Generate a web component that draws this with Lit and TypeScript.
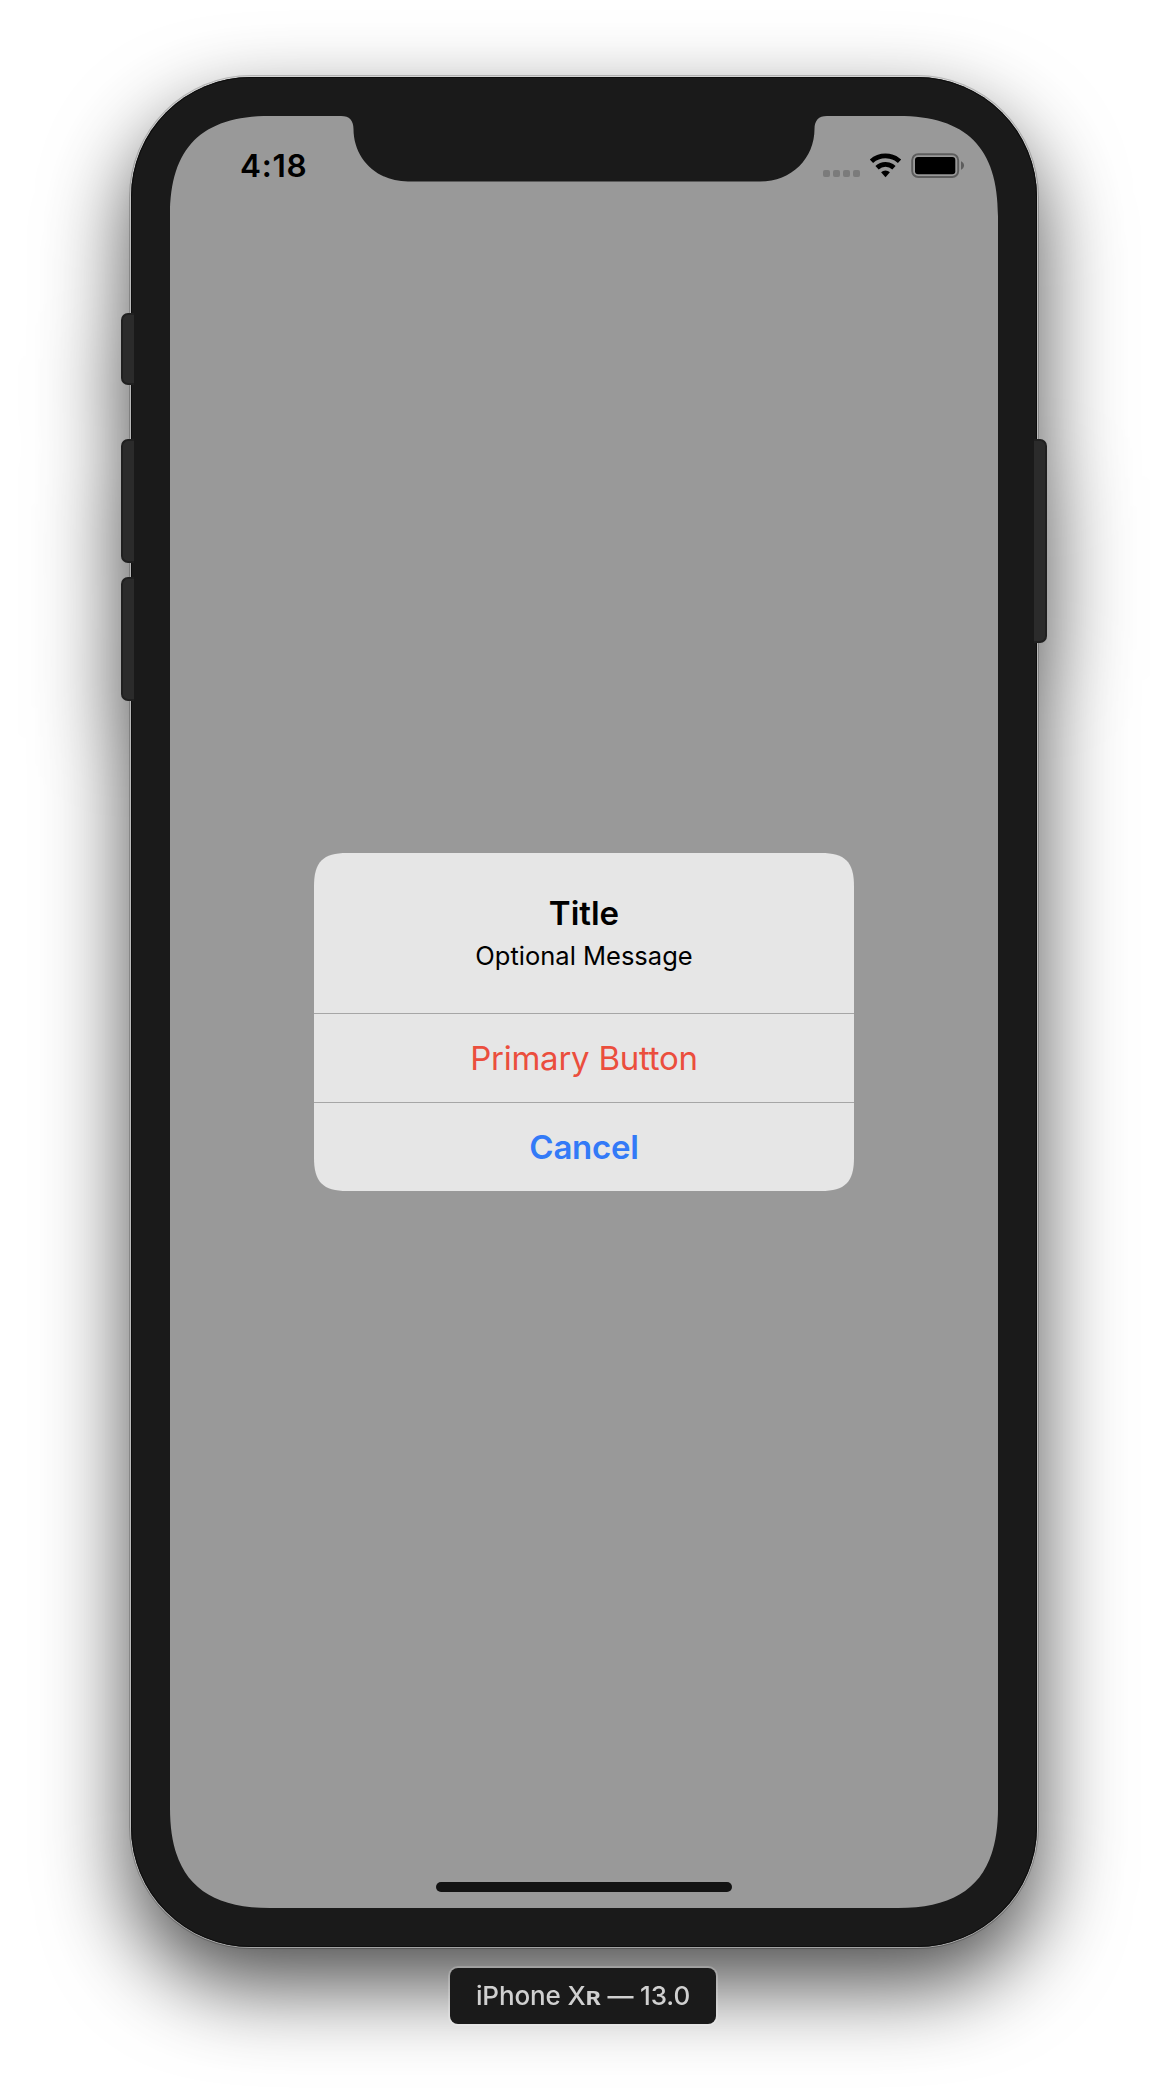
import { LitElement, html, css, svg } from "lit";
import { customElement } from "lit/decorators.js";

@customElement("status-icons")
class StatusIcons extends LitElement {
  static styles = css`
    :host { display: block; }
    svg { display: block; }
  `;

  render() {
    const dots = [0, 10, 20, 30].map(
      (x) => svg`<rect x=${x} y="18" width="7" height="7" rx="2" fill="#7b7b7b" />`
    );
    return html`
      <svg width="142" height="28" viewBox="0 0 142 28">
        ${dots}
        <g transform="translate(62.5 25.2)">
          <path d="M-15.7 -17.75A23.7 23.7 0 0 1 15.7 -17.75L12.4 -14.3A19 19 0 0 0 -12.4 -14.3Z" />
          <path d="M-10.1 -11.2A15.1 15.1 0 0 1 10.1 -11.2L6.8 -7.8A10.4 10.4 0 0 0 -6.8 -7.8Z" />
          <path d="M-4.4 -4.9A6.6 6.6 0 0 1 4.4 -4.9L0 0Z" />
        </g>
        <rect x="89.2" y="2.2" width="46" height="22.8" rx="6" fill="none" stroke="#5d5d5d" stroke-width="1.9" />
        <rect x="92" y="5" width="40.3" height="17.2" rx="3" />
        <path d="M138 9.3C139.9 10 141 11.6 141 13.5C141 15.4 139.9 17 138 17.7Z" fill="#5d5d5d" />
      </svg>
    `;
  }
}

@customElement("alert-dialog")
class AlertDialog extends LitElement {
  static styles = css`
    :host {
      display: flex;
      flex-direction: column;
      width: 540px;
      height: 338px;
      background: #e6e6e6;
      clip-path: path("M0 33C0 9 9 0 33 0H507C531 0 540 9 540 33V305C540 329 531 338 507 338H33C9 338 0 329 0 305Z");
      text-align: center;
      color: #000;
    }
    .head {
      box-sizing: border-box;
      height: 160px;
      padding-top: 40px;
    }
    .title {
      font-size: 33px;
      line-height: 40px;
      font-weight: 600;
      letter-spacing: 0;
    }
    .message {
      font-size: 25.5px;
      line-height: 34px;
      margin-top: 6px;
    }
    .action {
      box-sizing: border-box;
      height: 89px;
      border: 0;
      border-top: 1px solid #a6a6a6;
      background: none;
      padding: 0;
      font: 400 33px/88px Inter, "Liberation Sans", sans-serif;
      letter-spacing: -0.25px;
    }
    .destructive { color: #eb4e3d; }
    .cancel { color: #337af7; font-weight: 600; }
  `;

  render() {
    return html`
      <div class="head">
        <div class="title">Title</div>
        <div class="message">Optional Message</div>
      </div>
      <button class="action destructive">Primary Button</button>
      <button class="action cancel">Cancel</button>
    `;
  }
}

@customElement("app-root")
class AppRoot extends LitElement {
  static styles = css`
    :host {
      display: flex;
      flex-direction: column;
      align-items: center;
      box-sizing: border-box;
      height: 2096px;
      padding-top: 77px;
      background: #fff;
      overflow: hidden;
      font-family: Inter, "Liberation Sans", sans-serif;
    }
    .device {
      position: relative;
      flex: none;
      filter: drop-shadow(0 37px 43px rgba(0, 0, 0, 0.7));
    }
    .phone {
      box-sizing: border-box;
      width: 906px;
      height: 1870px;
      padding: 39px;
      border-radius: 120px;
      background: #1a1a1a;
      box-shadow:
        inset 0 0 0 1px #0d0d0d,
        0 0 0 1px rgba(255, 255, 255, 0.45),
        0 0 0 2px rgba(0, 0, 0, 0.2);
    }
    .key {
      position: absolute;
      box-sizing: border-box;
      width: 13px;
      background: #2b2b2b;
      border: 2px solid #202020;
    }
    .left { left: -10px; border-right: 0; border-radius: 7px 0 0 7px; }
    .right { right: -10px; border-left: 0; border-radius: 0 7px 7px 0; }
    .mute { top: 236px; height: 72px; }
    .up { top: 362px; height: 124px; }
    .down { top: 500px; height: 124px; }
    .power { top: 362px; height: 204px; }
    .screen {
      display: flex;
      flex-direction: column;
      width: 828px;
      height: 1792px;
      background: #999;
      clip-path: path("M0 100C0 31.5 31.5 0 100 0H171C179.5 0 183.5 4.5 183.5 13C183.5 42 206 65.5 238 65.5H590C622 65.5 644.5 42 644.5 13C644.5 4.5 648.5 0 657 0H728C796.5 0 828 31.5 828 100V1692C828 1760.5 796.5 1792 728 1792H100C31.5 1792 0 1760.5 0 1692Z");
    }
    .status {
      display: flex;
      justify-content: space-between;
      box-sizing: border-box;
      height: 88px;
      padding: 30px 33px 0 70px;
    }
    .time {
      font-size: 31.5px;
      line-height: 40px;
      font-weight: 600;
      letter-spacing: 0.7px;
    }
    .icons { margin-top: 6px; }
    .content {
      flex: 1;
      display: flex;
      align-items: center;
      justify-content: center;
    }
    .home {
      display: flex;
      justify-content: center;
      align-items: flex-end;
      box-sizing: border-box;
      height: 68px;
      padding-bottom: 16px;
    }
    .bar {
      width: 296px;
      height: 10px;
      border-radius: 5px;
      background: #131313;
    }
    .label {
      position: relative;
      margin-top: 21px;
      width: 266px;
      height: 56px;
      flex: none;
      border-radius: 8px;
      background: #1a1a1a;
      box-shadow: 0 0 0 2px rgba(255, 255, 255, 0.2);
      color: #d0d0d0;
      font-size: 26px;
      font-weight: 500;
      line-height: 56px;
      letter-spacing: -0.13px;
      text-align: center;
      white-space: nowrap;
      margin-right: 2px;
    }
    .small { font-weight: 600; }
  `;

  render() {
    return html`
      <div class="device">
        <div class="phone">
          <div class="screen">
            <div class="status">
              <div class="time">4:18</div>
              <status-icons class="icons"></status-icons>
            </div>
            <div class="content"><alert-dialog></alert-dialog></div>
            <div class="home"><div class="bar"></div></div>
          </div>
        </div>
        <div class="key left mute"></div>
        <div class="key left up"></div>
        <div class="key left down"></div>
        <div class="key right power"></div>
      </div>
      <div class="label">iPhone X<span class="small">ʀ</span> — 13.0</div>
    `;
  }
}
